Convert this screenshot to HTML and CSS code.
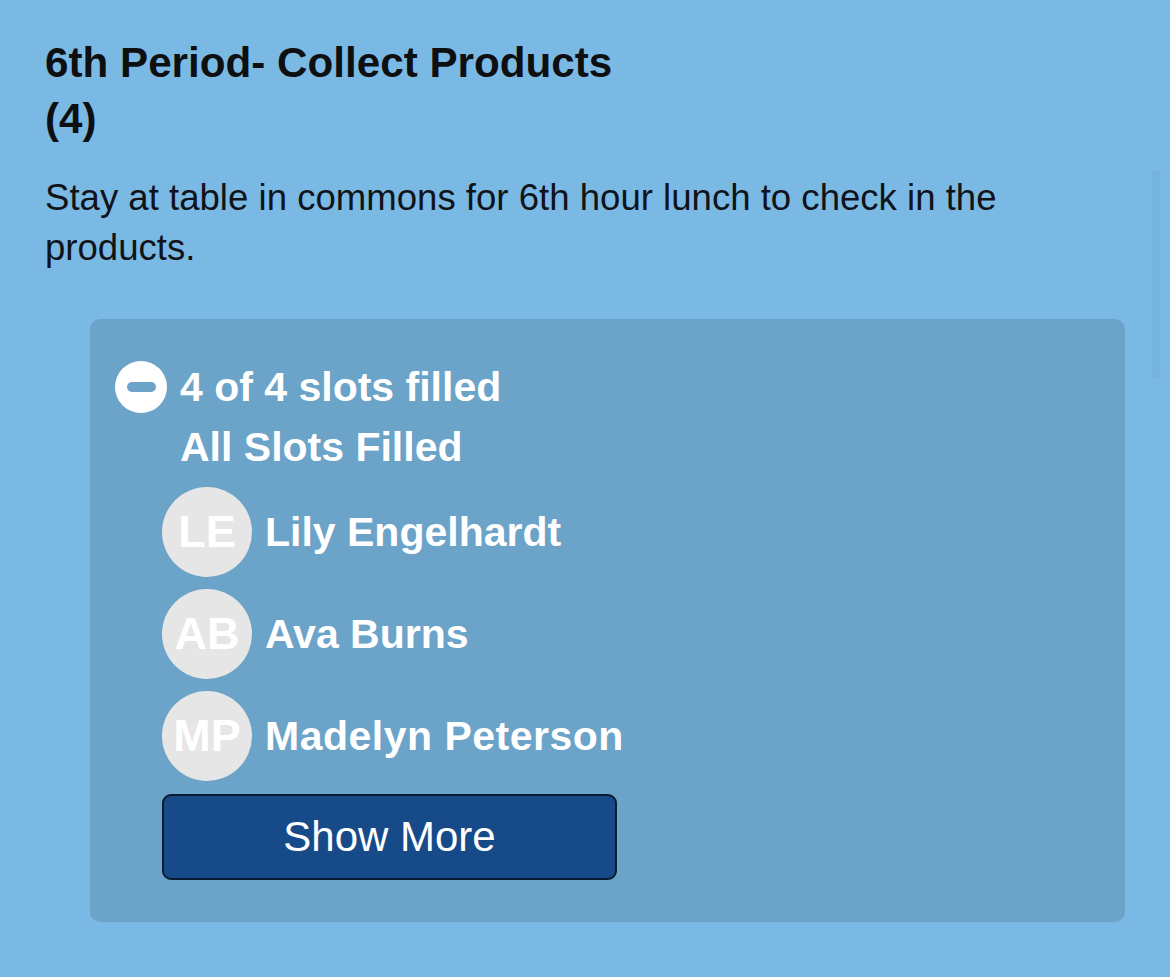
FILE: index.html
```html
<!DOCTYPE html>
<html lang="en">
<head>
<meta charset="utf-8">
<title>6th Period- Collect Products</title>
<link rel="stylesheet" href="styles.css">
</head>
<body>
<div class="page">
  <h1 class="title">6th Period- Collect Products<br>(4)</h1>
  <p class="desc">Stay at table in commons for 6th hour lunch to check in the products.</p>
  <div class="slots">
    <div class="slots-head">
      <span class="toggle"><span class="toggle-bar"></span></span>
      <div class="slots-text">
        <div class="slots-line">4 of 4 slots filled</div>
        <div class="slots-line">All Slots Filled</div>
      </div>
    </div>
    <ul class="people">
      <li class="person"><span class="avatar">LE</span><span class="name">Lily Engelhardt</span></li>
      <li class="person"><span class="avatar">AB</span><span class="name">Ava Burns</span></li>
      <li class="person"><span class="avatar">MP</span><span class="name name-wide">Madelyn Peterson</span></li>
    </ul>
    <button class="more" type="button">Show More</button>
  </div>
</div>
<div class="scroll-indicator"></div>
</body>
</html>
```
FILE: styles.css
```css
html, body {
  margin: 0;
  padding: 0;
}
body {
  background: #7bb9e5;
  font-family: "Liberation Sans", Arial, Helvetica, sans-serif;
  min-height: 977px;
  position: relative;
  overflow: hidden;
}
.page {
  padding: 35px 45px 40px 45px;
}
.title {
  margin: 0;
  font-size: 42.2px;
  line-height: 56px;
  font-weight: 700;
  color: #0e0f10;
}
.desc {
  margin: 26px 0 0 0;
  font-size: 36.6px;
  line-height: 50px;
  font-weight: 400;
  color: #101418;
}
.slots {
  margin: 46px 0 0 45px;
  background: #6ba3c9;
  border-radius: 10px;
  padding: 38px 25px 42px 25px;
  color: #ffffff;
}
.slots-head {
  display: flex;
  align-items: flex-start;
  gap: 13px;
}
.toggle {
  width: 52px;
  height: 52px;
  margin-top: 4px;
  border-radius: 50%;
  background: #ffffff;
  display: flex;
  align-items: center;
  justify-content: center;
  flex: none;
}
.toggle-bar {
  width: 29px;
  height: 10px;
  border-radius: 5px;
  background: #6ba3c9;
}
.slots-line {
  font-size: 41px;
  line-height: 60px;
  font-weight: 700;
}
.people {
  list-style: none;
  margin: 10px 0 0 47px;
  padding: 0;
  display: flex;
  flex-direction: column;
  gap: 12px;
}
.person {
  display: flex;
  align-items: center;
  gap: 13px;
}
.avatar {
  width: 90px;
  height: 90px;
  border-radius: 50%;
  background: #e6e6e6;
  color: #ffffff;
  font-size: 45px;
  font-weight: 700;
  display: flex;
  align-items: center;
  justify-content: center;
  flex: none;
}
.name {
  font-size: 41px;
  font-weight: 700;
  line-height: 50px;
}
.name-wide {
  letter-spacing: 0.5px;
}
.more {
  display: block;
  margin: 13px 0 0 47px;
  width: 455px;
  height: 86px;
  background: #174a89;
  border: 2px solid #0c1c30;
  border-radius: 9px;
  color: #ffffff;
  font-family: "Liberation Sans", Arial, Helvetica, sans-serif;
  font-size: 42px;
  font-weight: 400;
  padding: 0;
}
.scroll-indicator {
  position: absolute;
  left: 1152px;
  top: 170px;
  width: 8px;
  height: 208px;
  background: rgba(40, 90, 140, 0.06);
  border-radius: 4px;
}
```
